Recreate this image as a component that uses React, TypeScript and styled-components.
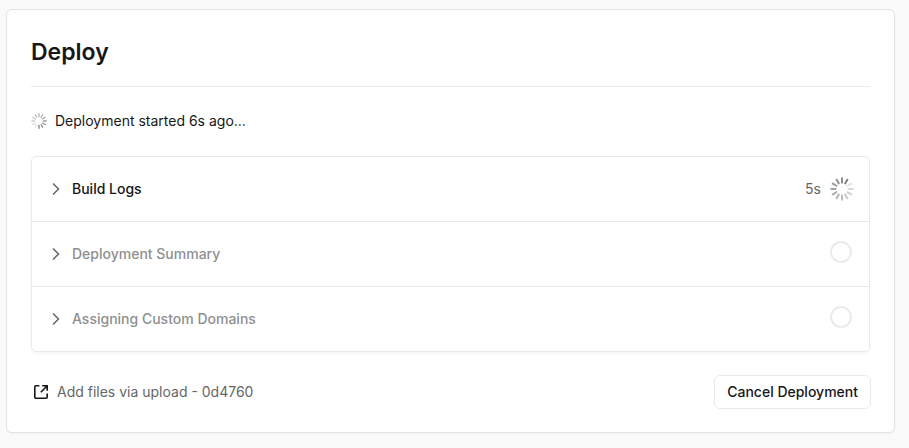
import React from "react";
import styled, { createGlobalStyle } from "styled-components";

const GlobalStyle = createGlobalStyle`
  *, *::before, *::after { box-sizing: border-box; }
  body {
    margin: 0;
    background: #fafafa;
    color: #171717;
    font: 14px/20px Inter, "Liberation Sans", sans-serif;
  }
`;

const Card = styled.main`
  margin: 9px 14px 15px 6px;
  padding: 24px 24px 23px;
  background: #fff;
  border: 1px solid #e2e2e2;
  border-radius: 6px;
  box-shadow: 0 1px 2px rgba(0, 0, 0, 0.04);
`;

const Title = styled.h1`
  margin: 0;
  padding-bottom: 16px;
  border-bottom: 1px solid #eaeaea;
  font-size: 23px;
  line-height: 36px;
  font-weight: 600;
`;

const Status = styled.p`
  display: flex;
  align-items: center;
  gap: 8px;
  margin: 24px 0 25px;
`;

const Steps = styled.section`
  border: 1px solid #eaeaea;
  border-radius: 5px;
  box-shadow: 0 2px 3px rgba(0, 0, 0, 0.04);
`;

const Step = styled.button<{ $pending?: boolean }>`
  display: flex;
  align-items: center;
  width: 100%;
  height: 64px;
  padding: 0 15px 0 16px;
  border: 0;
  background: none;
  font: inherit;
  font-weight: 500;
  text-align: left;
  color: ${(p) => (p.$pending ? "#8f8f8f" : "#171717")};

  & + & {
    height: 65px;
    border-top: 1px solid #eaeaea;
  }
`;

const StepName = styled.span`
  flex: 1;
  margin-left: 8px;
`;

const Duration = styled.span`
  margin-right: 9px;
  color: #666;
  font-weight: 400;
`;

const PendingMark = styled.span`
  width: 22px;
  height: 22px;
  margin: 0 2px 4px 0;
  border: 2px solid #ebebeb;
  border-radius: 50%;
`;

const Footer = styled.footer`
  display: flex;
  align-items: center;
  justify-content: space-between;
  margin-top: 23px;
`;

const CommitLink = styled.a`
  display: flex;
  align-items: center;
  gap: 6px;
  color: #666;
  text-decoration: none;
`;

const CancelButton = styled.button`
  height: 34px;
  margin-right: -1px;
  padding: 0 12px;
  border: 1px solid #eaeaea;
  border-radius: 6px;
  background: #fff;
  color: #171717;
  font: inherit;
  font-weight: 500;
`;

const Icon = styled.svg`
  display: block;
  flex: none;
`;

function Spinner({ size, lead }: { size: number; lead: number }) {
  return (
    <Icon width={size} height={size} viewBox="0 0 24 24" aria-hidden="true">
      {Array.from({ length: 12 }, (_, i) => (
        <rect
          key={i}
          x="17.6"
          y="11"
          width="6"
          height="2"
          rx="0.4"
          fill="#808080"
          opacity={1 - i * 0.07}
          transform={`rotate(${lead - i * 30} 12 12)`}
        />
      ))}
    </Icon>
  );
}

function Chevron() {
  return (
    <Icon width="16" height="16" viewBox="0 0 16 16" aria-hidden="true">
      <path d="M5 2.5 10.5 8 5 13.5" fill="none" stroke="#666" strokeWidth="1.5" />
    </Icon>
  );
}

function ExternalIcon() {
  return (
    <Icon width="20" height="20" viewBox="0 0 20 20" aria-hidden="true">
      <path
        d="M8.4 3.8H4.8A1 1 0 0 0 3.8 4.8v10.4a1 1 0 0 0 1 1h10.4a1 1 0 0 0 1-1v-3.6M11.2 3.8h5V8.8M16 4l-6.2 6.2"
        fill="none"
        stroke="#171717"
        strokeWidth="1.6"
      />
    </Icon>
  );
}

export default function App() {
  return (
    <>
      <GlobalStyle />
      <Card>
        <Title>Deploy</Title>
        <Status>
          <Spinner size={16} lead={90} />
          Deployment started 6s ago…
        </Status>
        <Steps>
          <Step type="button">
            <Chevron />
            <StepName>Build Logs</StepName>
            <Duration>5s</Duration>
            <Spinner size={24} lead={-60} />
          </Step>
          {["Deployment Summary", "Assigning Custom Domains"].map((name) => (
            <Step type="button" key={name} $pending>
              <Chevron />
              <StepName>{name}</StepName>
              <PendingMark />
            </Step>
          ))}
        </Steps>
        <Footer>
          <CommitLink href="#commit">
            <ExternalIcon />
            Add files via upload - 0d4760
          </CommitLink>
          <CancelButton type="button">Cancel Deployment</CancelButton>
        </Footer>
      </Card>
    </>
  );
}
